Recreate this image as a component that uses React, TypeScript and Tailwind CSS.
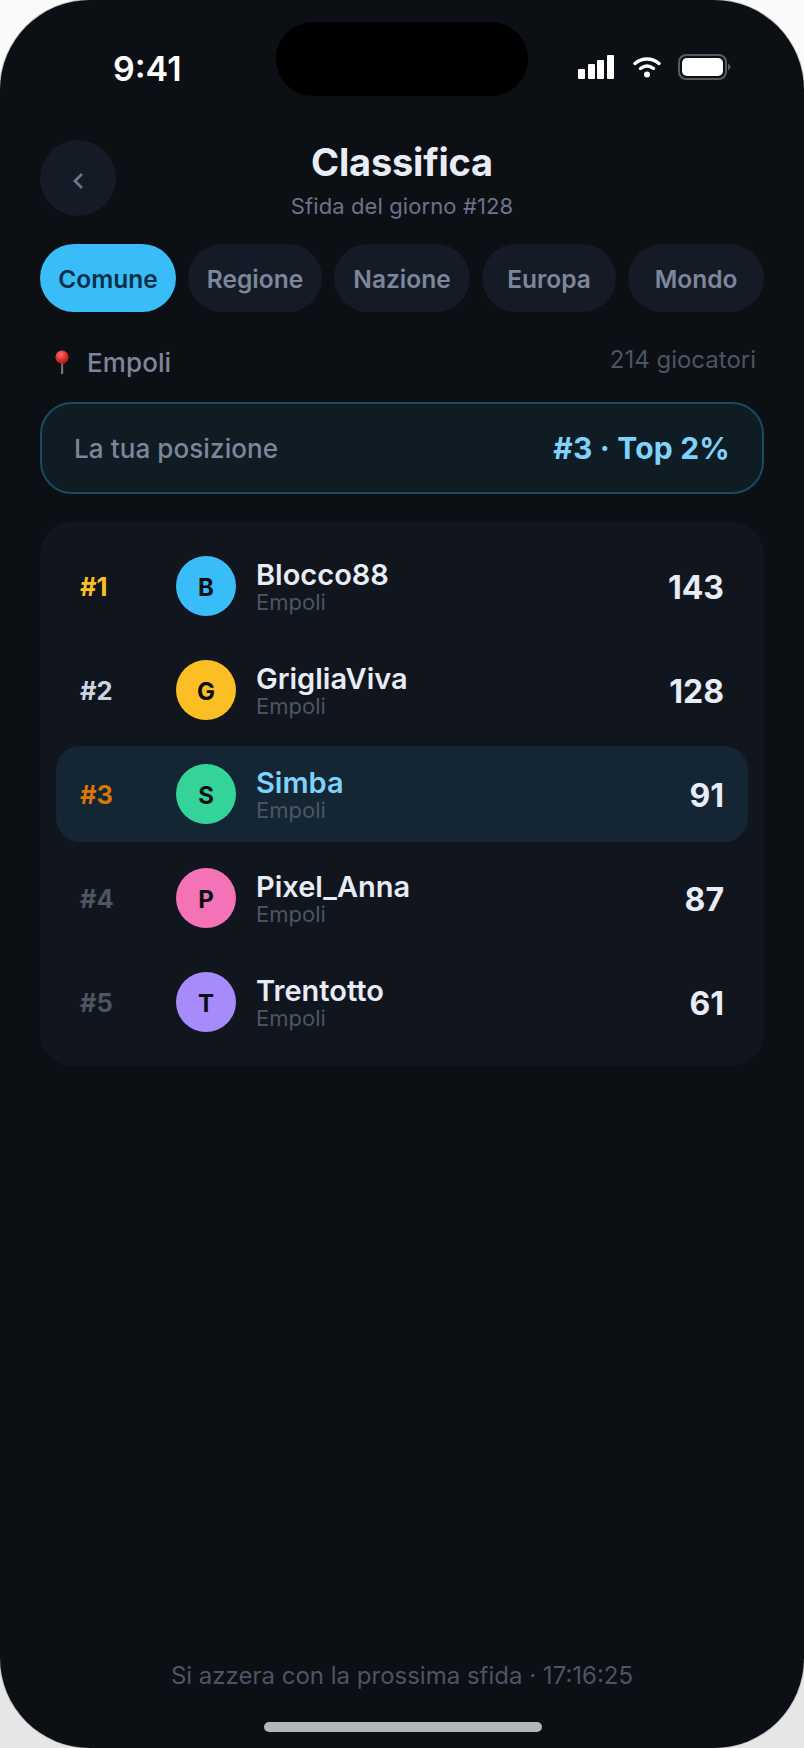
const tabs = [
  { label: "Comune", width: "w-[136px]", active: true },
  { label: "Regione", width: "w-[134px]" },
  { label: "Nazione", width: "w-[136px]" },
  { label: "Europa", width: "w-[134px]" },
  { label: "Mondo", width: "w-[136px]" },
];

const players = [
  { rank: 1, initial: "B", name: "Blocco88", score: 143, rankColor: "text-[#fbbf24]", avatar: "bg-[#38bdf8]" },
  { rank: 2, initial: "G", name: "GrigliaViva", score: 128, rankColor: "text-[#cbd5e1]", avatar: "bg-[#fbbf24]" },
  { rank: 3, initial: "S", name: "Simba", score: 91, rankColor: "text-[#d97706]", avatar: "bg-[#34d399]", me: true },
  { rank: 4, initial: "P", name: "Pixel_Anna", score: 87, rankColor: "text-[#4b5563]", avatar: "bg-[#f472b6]" },
  { rank: 5, initial: "T", name: "Trentotto", score: 61, rankColor: "text-[#4b5563]", avatar: "bg-[#a78bfa]" },
];

function StatusIcons() {
  return (
    <div className="flex items-center">
      <svg width="36" height="24" viewBox="0 0 36 24" fill="white">
        <rect x="0" y="14" width="7" height="10" rx="1" />
        <rect x="10" y="9" width="7" height="15" rx="1" />
        <rect x="19" y="5" width="7" height="19" rx="1" />
        <rect x="29" y="0" width="7" height="24" rx="1" />
      </svg>
      <svg className="ml-[19px]" width="28" height="22" viewBox="0 0 28 22" fill="none" stroke="white" strokeWidth="3.4" strokeLinecap="round">
        <path d="M2 7.5C9 1.5 19 1.5 26 7.5" />
        <path d="M7.5 12.5C11.5 9.5 16.5 9.5 20.5 12.5" />
        <circle cx="14" cy="18.5" r="3" fill="white" stroke="none" />
      </svg>
      <div className="ml-[17px] flex items-center">
        <div className="h-[26px] w-[49px] rounded-[8px] border-2 border-[#5a5b5e] p-[2px]">
          <div className="h-full w-full rounded-[5px] bg-white" />
        </div>
        <svg className="ml-[1px]" width="3" height="8" viewBox="0 0 3 8" fill="#5a5b5e">
          <path d="M0 0l3 4-3 4z" />
        </svg>
      </div>
    </div>
  );
}

function Pin() {
  return (
    <svg width="18" height="24" viewBox="0 0 18 24">
      <defs>
        <radialGradient id="pinHead" cx="0.4" cy="0.3" r="0.8">
          <stop offset="0" stopColor="#f87171" />
          <stop offset="0.6" stopColor="#dc2626" />
          <stop offset="1" stopColor="#991b1b" />
        </radialGradient>
      </defs>
      <rect x="8" y="10" width="2.2" height="14" fill="#7c6f64" />
      <circle cx="9" cy="7" r="6.6" fill="url(#pinHead)" />
    </svg>
  );
}

export default function App() {
  return (
    <div className="h-[1748px] w-[804px] bg-gradient-to-b from-[#fbfbfb] to-[#e6e6e6] font-['Inter',sans-serif]">
      <div className="relative flex h-full flex-col overflow-hidden rounded-[90px] bg-[#0c0f14] px-[40px] shadow-[0_0_0_1px_#c9c9c9]">
        <div className="absolute left-1/2 top-[22px] h-[74px] w-[252px] -translate-x-1/2 rounded-[37px] bg-black" />

        <div className="flex h-[140px] shrink-0 items-start justify-between pl-[73px] pr-[33px] pt-[48px]">
          <span className="text-[34px] font-semibold leading-[42px] text-white">9:41</span>
          <div className="pt-[6px]">
            <StatusIcons />
          </div>
        </div>

        <div className="relative flex h-[76px] shrink-0 flex-col items-center">
          <button type="button" className="absolute left-0 top-0 flex h-[76px] w-[76px] items-center justify-center rounded-full bg-[#151b26] pt-[6px] text-[#6b7488]">
            <svg width="12" height="18" viewBox="0 0 12 18" fill="none" stroke="currentColor" strokeWidth="2.8">
              <path d="M10 2L3 9l7 7" />
            </svg>
          </button>
          <h1 className="text-[38px] font-bold leading-[44px] tracking-[-0.2px] text-[#e8ecf4]">Classifica</h1>
          <p className="mt-[8px] text-[22px] leading-[28px] tracking-[0.1px] text-[#6b7488]">Sfida del giorno #128</p>
        </div>

        <div className="mt-[28px] flex gap-[12px]">
          {tabs.map((tab) => (
            <div
              key={tab.label}
              className={
                tab.width +
                (tab.active
                  ? " flex h-[68px] items-center justify-center rounded-[34px] bg-[#38bdf8] pt-[3px] text-[24.5px] font-semibold text-[#082f49]"
                  : " flex h-[68px] items-center justify-center rounded-[34px] bg-[#151b26] pt-[3px] text-[24.5px] font-semibold text-[#7d869b]")
              }
            >
              {tab.label}
            </div>
          ))}
        </div>

        <div className="mt-[30px] flex h-[40px] items-center justify-between pl-[13px] pr-[8px]">
          <div className="flex items-center gap-[16px]">
            <Pin />
            <span className="text-[26px] font-medium tracking-[0.1px] text-[#7d869b]">Empoli</span>
          </div>
          <span className="-mt-[4px] text-[24px] text-[#4b5563]">214 giocatori</span>
        </div>

        <div className="mt-[20px] flex h-[92px] items-center justify-between rounded-[32px] border-2 border-[#1c4a5e] bg-[#0f1c24] px-[32px] pt-[1px]">
          <span className="text-[26px] font-medium tracking-[0.1px] text-[#7d869b]">La tua posizione</span>
          <span className="text-[30px] font-bold tracking-[0.2px] text-[#7dd3fc]">#3 · Top 2%</span>
        </div>

        <div className="mt-[28px] flex flex-col gap-[8px] rounded-[32px] bg-[#11151e] p-[16px]">
          {players.map((p) => (
            <div
              key={p.rank}
              className={
                p.me
                  ? "flex h-[96px] items-center rounded-[24px] bg-[#142534] px-[24px]"
                  : "flex h-[96px] items-center rounded-[24px] px-[24px]"
              }
            >
              <span className={"w-[96px] shrink-0 pt-[2px] text-[25.5px] font-bold " + p.rankColor}>#{p.rank}</span>
              <div className={"flex h-[60px] w-[60px] shrink-0 items-center justify-center rounded-full pt-[3px] text-[24px] font-bold text-[#0a0d12] " + p.avatar}>
                {p.initial}
              </div>
              <div className="ml-[20px] flex min-w-0 flex-1 flex-col pt-[2px]">
                <span className={p.me ? "text-[29px] font-semibold leading-[30px] text-[#7dd3fc]" : "text-[29px] font-semibold leading-[30px] text-[#e8ecf4]"}>
                  {p.name}
                </span>
                <span className="text-[22px] leading-[24px] text-[#4b5563]">Empoli</span>
              </div>
              <span className="pt-[4px] text-[32px] font-bold text-[#e8ecf4]">{p.score}</span>
            </div>
          ))}
        </div>

        <div className="mt-auto pb-[54px] text-center text-[24px] text-[#4b5563]">Si azzera con la prossima sfida · 17:16:25</div>
        <div className="absolute bottom-[16px] left-[264px] h-[10px] w-[278px] rounded-full bg-[#b5b6b8]" />
      </div>
    </div>
  );
}
